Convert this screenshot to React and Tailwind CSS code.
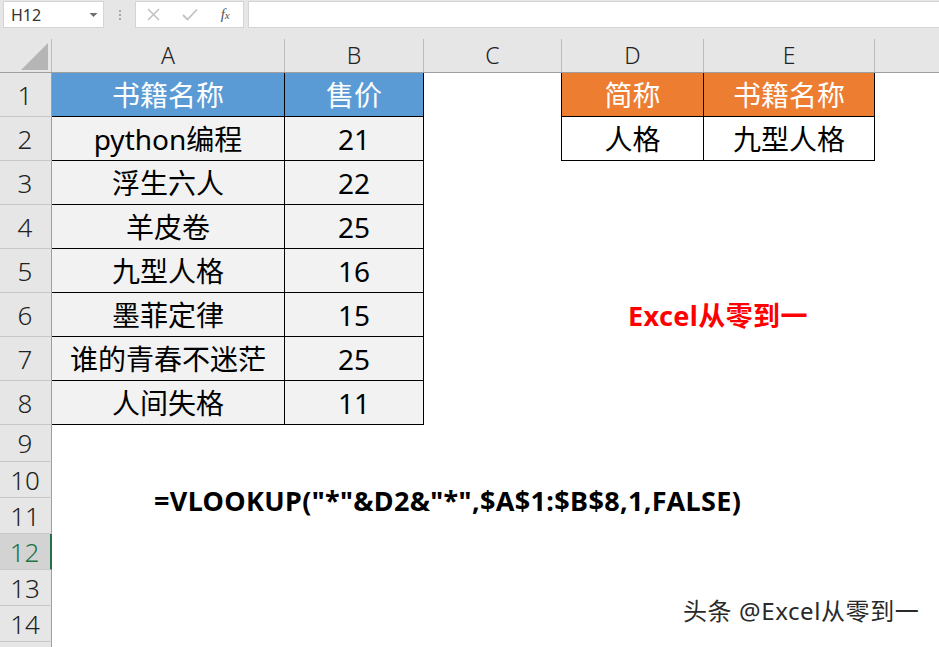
import React from "react";

const cols = [
  { key: "A", w: "w-[233px]" },
  { key: "B", w: "w-[139px]" },
  { key: "C", w: "w-[138px]" },
  { key: "D", w: "w-[142px]" },
  { key: "E", w: "w-[171px]" },
];

const books = [
  ["python编程", "21"],
  ["浮生六人", "22"],
  ["羊皮卷", "25"],
  ["九型人格", "16"],
  ["墨菲定律", "15"],
  ["谁的青春不迷茫", "25"],
  ["人间失格", "11"],
];

const FONT = { fontFamily: '"Noto Sans", "Noto Sans CJK SC", sans-serif' };

function RowHead({ n, h, selected }) {
  return (
    <div
      className={
        "w-[52px] shrink-0 flex items-center justify-center border-b border-b-[#c8c8c8] text-[26px] leading-none font-light " +
        h +
        (selected
          ? " bg-[#d3d3d3] text-[#217346] border-r-2 border-r-[#217346]"
          : " bg-[#e6e6e6] text-[#222] border-r border-r-[#9f9f9f]")
      }
    >
      <span className="pr-[1px]">{n}</span>
    </div>
  );
}

function Cell({ w, className = "", children }) {
  return (
    <div
      className={
        w +
        " shrink-0 flex items-center justify-center text-[28px] leading-none " +
        className
      }
    >
      {children}
    </div>
  );
}

export default function App() {
  return (
    <div
      className="relative w-[939px] h-[647px] overflow-hidden bg-white"
      style={FONT}
    >
      {/* formula bar */}
      <div className="h-[37px] bg-[#e6e6e6] flex items-start pt-[1px] pl-[3px]">
        <div className="w-[101px] h-[27px] bg-white border border-[#d4d4d4] flex items-center justify-between pl-[7px] pr-[5px]">
          <span className="text-[16px] text-[#333] leading-none">H12</span>
          <svg width="9" height="6" viewBox="0 0 9 6">
            <path d="M0.5 1 L8.5 1 L4.5 5 Z" fill="#707070" />
          </svg>
        </div>
        <div className="w-[31px] h-[27px] flex flex-col items-center justify-center gap-[2px]">
          <div className="w-[2px] h-[2px] bg-[#a8a8a8]" />
          <div className="w-[2px] h-[2px] bg-[#a8a8a8]" />
          <div className="w-[2px] h-[2px] bg-[#a8a8a8]" />
        </div>
        <div className="w-[109px] h-[27px] bg-white border border-[#d4d4d4] flex items-center">
          <div className="w-[36px] flex justify-center">
            <svg width="13" height="13" viewBox="0 0 13 13">
              <path d="M1 1 L12 12 M12 1 L1 12" stroke="#c2c2c2" strokeWidth="1.6" />
            </svg>
          </div>
          <div className="w-[36px] flex justify-center">
            <svg width="16" height="13" viewBox="0 0 16 13">
              <path d="M1 7 L5.5 11.5 L15 1.5" stroke="#c2c2c2" strokeWidth="1.8" fill="none" />
            </svg>
          </div>
          <div className="w-[36px] flex justify-center">
            <span
              className="text-[15px] italic text-[#555] leading-none"
              style={{ fontFamily: '"Liberation Serif", serif' }}
            >
              f<span className="text-[11px]">x</span>
            </span>
          </div>
        </div>
        <div className="ml-[4px] flex-1 h-[27px] bg-white border border-[#d4d4d4] border-r-0" />
      </div>

      {/* column headers */}
      <div className="h-[36px] bg-[#e6e6e6] border-b border-[#9f9f9f] flex items-end">
        <div className="w-[52px] h-[33px] shrink-0 border-r border-[#bcbcbc] flex items-end justify-end pr-[3px] pb-[2px]">
          <svg width="27" height="27" viewBox="0 0 27 27">
            <path d="M0 27 L27 27 L27 0 Z" fill="#b5b5b5" />
          </svg>
        </div>
        {cols.map((c) => (
          <div
            key={c.key}
            className={
              c.w +
              " h-[33px] shrink-0 border-r border-[#bcbcbc] flex items-center justify-center text-[23px] font-light text-[#222] leading-none"
            }
          >
            {c.key}
          </div>
        ))}
        <div className="flex-1" />
      </div>

      {/* row 1 */}
      <div className="flex h-[44px]">
        <RowHead n={1} h="h-[44px]" />
        <Cell w="w-[233px]" className="bg-[#5b9bd5] text-white border-r border-b border-black">
          书籍名称
        </Cell>
        <Cell w="w-[139px]" className="bg-[#5b9bd5] text-white border-r border-b border-black">
          售价
        </Cell>
        <Cell w="w-[138px]" className="border-r border-black" />
        <Cell w="w-[142px]" className="bg-[#ed7d31] text-white border-r border-b border-black">
          简称
        </Cell>
        <Cell w="w-[171px]" className="bg-[#ed7d31] text-white border-r border-b border-black">
          书籍名称
        </Cell>
      </div>

      {/* rows 2-8 */}
      {books.map(([name, price], i) => (
        <div key={i} className="flex h-[44px]">
          <RowHead n={i + 2} h="h-[44px]" />
          <Cell w="w-[233px]" className="bg-[#f2f2f2] text-black border-r border-b border-black">
            {name}
          </Cell>
          <Cell w="w-[139px]" className="bg-[#f2f2f2] text-black border-r border-b border-black">
            {price}
          </Cell>
          {i === 0 ? (
            <>
              <Cell w="w-[138px]" className="border-r border-black" />
              <Cell w="w-[142px]" className="text-black border-r border-b border-black">
                人格
              </Cell>
              <Cell w="w-[171px]" className="text-black border-r border-b border-black">
                九型人格
              </Cell>
            </>
          ) : null}
        </div>
      ))}

      {/* rows 9-15 */}
      <div className="flex h-[37px]">
        <RowHead n={9} h="h-[37px]" />
      </div>
      {[10, 11, 12, 13, 14].map((n) => (
        <div key={n} className="flex h-[36px]">
          <RowHead n={n} h="h-[36px]" selected={n === 12} />
        </div>
      ))}
      <div className="flex h-[36px]">
        <div className="w-[52px] h-[36px] shrink-0 bg-[#e6e6e6] border-r border-[#9f9f9f]" />
      </div>

      {/* overlay texts */}
      <div className="absolute left-[628px] top-[302px] text-[27px] tracking-[0.4px] font-bold text-[#ff0000] leading-none whitespace-nowrap">
        Excel从零到一
      </div>
      <div className="absolute left-[154px] top-[487px] text-[27px] tracking-[0.35px] font-bold text-black leading-none whitespace-nowrap">
        =VLOOKUP("*"&amp;D2&amp;"*",$A$1:$B$8,1,FALSE)
      </div>
      <div
        className="absolute left-[683px] top-[599px] text-[24px] tracking-[0.6px] text-[#2a2a2a] leading-none whitespace-nowrap"
        style={{ textShadow: "0 0 2px #fff, 0 0 2px #fff" }}
      >
        头条 @Excel从零到一
      </div>
    </div>
  );
}
